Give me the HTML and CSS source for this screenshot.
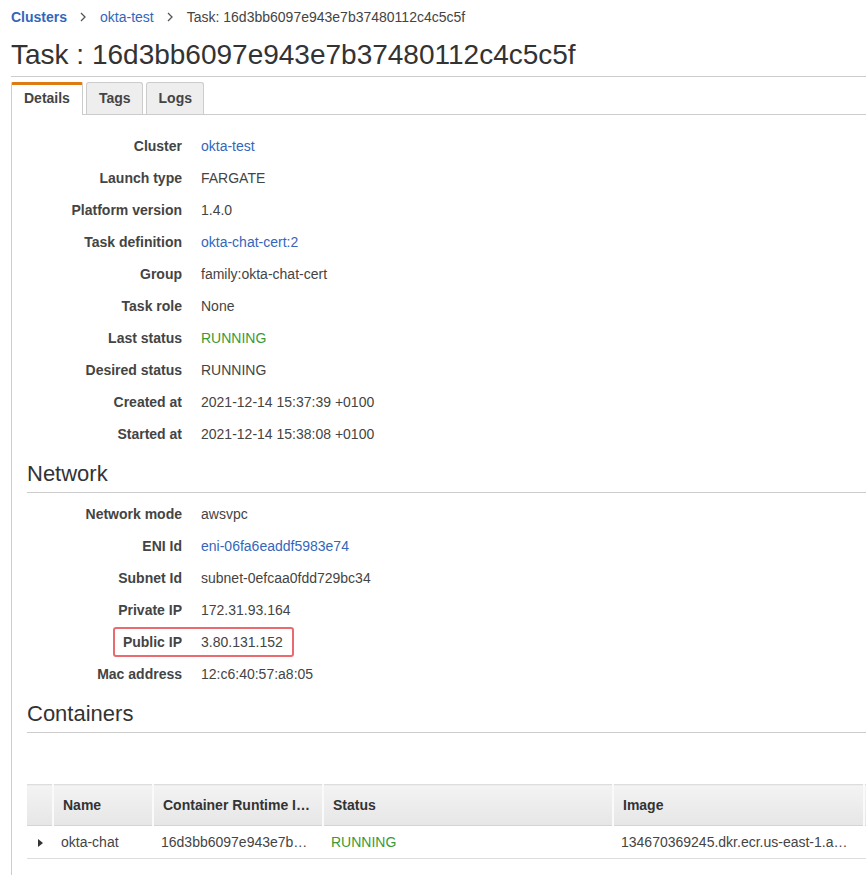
FILE: index.html
```html
<!DOCTYPE html>
<html lang="en">
<head>
    <meta charset="UTF-8">
    <meta name="viewport" content="width=device-width, initial-scale=1.0">
    <title>Task : 16d3bb6097e943e7b37480112c4c5c5f</title>
    <link rel="stylesheet" href="styles.css">
</head>
<body>
    <nav class="breadcrumb">
        <a href="#" class="crumb-root">Clusters</a>
        <svg class="chevron" width="6" height="10" viewBox="0 0 6 10"><path d="M1 1 L5 5 L1 9" fill="none" stroke="#555" stroke-width="1.3"/></svg>
        <a href="#">okta-test</a>
        <svg class="chevron" width="6" height="10" viewBox="0 0 6 10"><path d="M1 1 L5 5 L1 9" fill="none" stroke="#555" stroke-width="1.3"/></svg>
        <span>Task: 16d3bb6097e943e7b37480112c4c5c5f</span>
    </nav>

    <h1 class="page-title">Task : 16d3bb6097e943e7b37480112c4c5c5f</h1>

    <ul class="tabs">
        <li class="tab active">Details</li>
        <li class="tab">Tags</li>
        <li class="tab">Logs</li>
    </ul>

    <div class="panel">
        <dl class="details">
            <div class="row"><dt>Cluster</dt><dd><a href="#">okta-test</a></dd></div>
            <div class="row"><dt>Launch type</dt><dd>FARGATE</dd></div>
            <div class="row"><dt>Platform version</dt><dd>1.4.0</dd></div>
            <div class="row"><dt>Task definition</dt><dd><a href="#">okta-chat-cert:2</a></dd></div>
            <div class="row"><dt>Group</dt><dd>family:okta-chat-cert</dd></div>
            <div class="row"><dt>Task role</dt><dd>None</dd></div>
            <div class="row"><dt>Last status</dt><dd class="ok">RUNNING</dd></div>
            <div class="row"><dt>Desired status</dt><dd>RUNNING</dd></div>
            <div class="row"><dt>Created at</dt><dd>2021-12-14 15:37:39 +0100</dd></div>
            <div class="row"><dt>Started at</dt><dd>2021-12-14 15:38:08 +0100</dd></div>
        </dl>

        <h2 class="section-title">Network</h2>
        <dl class="details">
            <div class="row"><dt>Network mode</dt><dd>awsvpc</dd></div>
            <div class="row"><dt>ENI Id</dt><dd><a href="#">eni-06fa6eaddf5983e74</a></dd></div>
            <div class="row"><dt>Subnet Id</dt><dd>subnet-0efcaa0fdd729bc34</dd></div>
            <div class="row"><dt>Private IP</dt><dd>172.31.93.164</dd></div>
            <div class="row marked"><dt>Public IP</dt><dd>3.80.131.152</dd><span class="mark"></span></div>
            <div class="row"><dt>Mac address</dt><dd>12:c6:40:57:a8:05</dd></div>
        </dl>

        <h2 class="section-title">Containers</h2>
        <div class="table-wrap">
            <table class="grid">
                <colgroup>
                    <col style="width:26px">
                    <col style="width:100px">
                    <col style="width:170px">
                    <col style="width:290px">
                    <col style="width:251px">
                    <col style="width:200px">
                </colgroup>
                <thead>
                    <tr>
                        <th></th>
                        <th>Name</th>
                        <th>Container Runtime I…</th>
                        <th>Status</th>
                        <th>Image</th>
                        <th></th>
                    </tr>
                </thead>
                <tbody>
                    <tr>
                        <td class="expander"><svg width="5" height="8" viewBox="0 0 5 8"><path d="M0 0 L5 4 L0 8 Z" fill="#333"/></svg></td>
                        <td>okta-chat</td>
                        <td>16d3bb6097e943e7b…</td>
                        <td class="ok">RUNNING</td>
                        <td>134670369245.dkr.ecr.us-east-1.a…</td>
                        <td></td>
                    </tr>
                </tbody>
            </table>
        </div>
    </div>
</body>
</html>
```

FILE: styles.css
```css
html, body {
    overflow: hidden;
}

body {
    margin: 0;
    padding-left: 11px;
    font-family: "Liberation Sans", Arial, sans-serif;
    font-size: 14px;
    color: #444;
    background-color: #fff;
}

a {
    color: #3366bb;
    text-decoration: none;
}

.ok {
    color: #3a9a35;
}

/* breadcrumb */
.breadcrumb {
    display: flex;
    align-items: center;
    gap: 13px;
    padding-top: 7px;
    line-height: 20px;
}

.breadcrumb .crumb-root {
    font-weight: bold;
}

.breadcrumb span {
    color: #444;
}

.chevron {
    margin-right: 1px;
}

/* title */
.page-title {
    margin: 10px 0 0;
    font-size: 28px;
    font-weight: normal;
    line-height: 36px;
    color: #333;
    padding-bottom: 3px;
    border-bottom: 1px solid #ccc;
}

/* tabs */
.tabs {
    display: flex;
    gap: 3px;
    list-style: none;
    margin: 5px 0 0;
    padding: 0 0 0 1px;
    border-bottom: 1px solid #ccc;
}

.tab {
    padding: 0 11px 0 12px;
    line-height: 31px;
    font-weight: bold;
    color: #444;
    background-color: #eee;
    border: 1px solid #ccc;
    border-bottom: none;
    border-radius: 3px 3px 0 0;
}

.tab.active {
    background-color: #fff;
    border-top: 3px solid #dd7a12;
    line-height: 26px;
    padding: 0 12px 4px;
    margin-bottom: -1px;
    border-radius: 2px 2px 0 0;
}

.tab.active:first-child {
    margin-left: -1px;
}

/* panel */
.panel {
    border-left: 1px solid #ccc;
    padding: 15px 0 16px 15px;
}

.details {
    margin: 0;
}

.row {
    position: relative;
    display: flex;
    height: 32px;
    align-items: center;
    margin-left: -15px;
}

.row dt {
    width: 170px;
    text-align: right;
    font-weight: bold;
    color: #444;
}

.row dd {
    margin: 0 0 0 19px;
    color: #444;
}

.row dd.ok {
    color: #3a9a35;
}

.mark {
    position: absolute;
    left: 101px;
    top: 1px;
    width: 177px;
    height: 26px;
    border: 2px solid #ea6b6f;
    border-radius: 3px;
}

.section-title {
    margin: 10px 0 0;
    font-size: 22px;
    font-weight: normal;
    line-height: 28px;
    color: #333;
    padding-bottom: 4px;
    border-bottom: 1px solid #ccc;
}

.section-title + .details {
    margin-top: 5px;
}

/* containers table */
.table-wrap {
    margin-top: 51px;
    overflow: hidden;
}

.grid {
    border-collapse: collapse;
    table-layout: fixed;
    width: 1037px;
}

.grid th {
    height: 40px;
    padding: 0 9px;
    text-align: left;
    font-weight: bold;
    color: #333;
    background: linear-gradient(#f3f3f3, #e6e6e6);
    border-top: 1px solid #ddd;
    border-bottom: 1px solid #d5d5d5;
    border-left: 2px solid #fafafa;
    white-space: nowrap;
    overflow: hidden;
}

.grid th:first-child {
    border-left: none;
}

.grid td {
    height: 32px;
    padding: 0 8px;
    border-bottom: 1px solid #ddd;
    white-space: nowrap;
    overflow: hidden;
    color: #444;
}

.grid td.ok {
    color: #3a9a35;
}

.grid td.expander {
    padding: 0 0 0 11px;
}
```
